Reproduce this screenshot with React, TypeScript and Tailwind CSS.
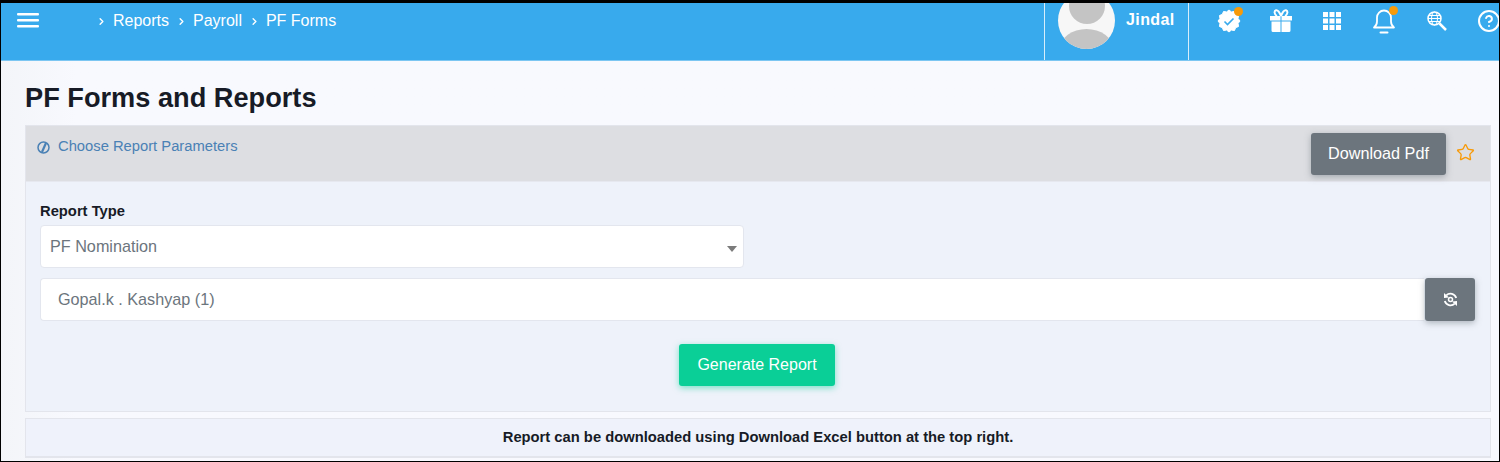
import React from 'react'
import { ChevronRight, CircleHelp, Star } from 'lucide-react'

const Dot = () => <span className="absolute -top-[2px] -right-[2px] w-[9px] h-[9px] rounded-full bg-[#f79a09]" />

const BadgeIcon = () => {
  // scalloped seal: points built around a circle
  const pts: string[] = []
  for (let i = 0; i < 24; i++) {
    const r = i % 2 === 0 ? 11 : 9.4
    const a = (i * Math.PI) / 12
    pts.push(`${12 + r * Math.cos(a)},${12 + r * Math.sin(a)}`)
  }
  return (
    <svg width="24" height="24" viewBox="0 0 24 24">
      <polygon points={pts.join(' ')} fill="#fff" stroke="#fff" strokeLinejoin="round" />
      <path d="M7.500 12.500l3 3 6-6" fill="none" stroke="#38aaed" strokeWidth="1.600" />
    </svg>
  )
}

const GiftIcon = () => (
  <svg width="24" height="24" viewBox="0 0 24 24" fill="#fff">
    <path d="M1 7h10.500v4.500H1zM12.500 7H23v4.500H12.500zM2.500 12.500h9V23H4a1.500 1.500 0 0 1-1.500-1.500zM12.500 12.500h9v9A1.500 1.500 0 0 1 20 23h-7.500z" />
    <path d="M12 7C10 2 8.500 1 7 1.300 5 1.700 5 5.500 8 7M12 7c2-5 3.500-6 5-5.700 2 .4 2 4.200-1 5.700" fill="none" stroke="#fff" strokeWidth="2" />
  </svg>
)

const GridIcon = () => (
  <svg width="18" height="18" viewBox="0 0 18 18" fill="#fff">
    {[0, 6.5, 13].map((y) =>
      [0, 6.5, 13].map((x) => <rect key={`${x}-${y}`} x={x} y={y} width="5" height="5" />)
    )}
  </svg>
)

const BellIcon = () => (
  <svg width="24" height="26" viewBox="0 0 24 26" fill="none" stroke="#fff" strokeWidth="1.800" strokeLinecap="round">
    <path d="M2 19.500c2-1.500 3-3 3-6V9.500a7 7 0 0 1 14 0v4c0 3 1 4.500 3 6z" strokeLinejoin="round" />
    <path d="M8.500 24.500h7" strokeWidth="2" />
  </svg>
)

const GlobeSearchIcon = () => (
  <svg width="20" height="20" viewBox="0 0 20 20" fill="none" stroke="#fff">
    <circle cx="7.500" cy="7.500" r="6.500" strokeWidth="1.500" />
    <ellipse cx="7.500" cy="7.500" rx="3" ry="6.500" strokeWidth="1" />
    <path d="M1 7.500h13M2 4.500h11M2 10.500h11" strokeWidth="1" />
    <path d="M12.500 12.500L19 19" strokeWidth="2.500" />
  </svg>
)

const SyncIcon = () => (
  <svg width="15" height="15" viewBox="0 0 15 15" fill="none" stroke="#fff" strokeWidth="1.800">
    <path d="M13.200 6A6 6 0 0 0 3.300 3.400M1.800 9A6 6 0 0 0 11.700 11.600" />
    <polygon points="1,1 1,6 6,5.500" fill="#fff" stroke="none" />
    <polygon points="14,14 14,9 9,9.500" fill="#fff" stroke="none" />
    <circle cx="7.500" cy="7.500" r="2" strokeWidth="1.500" />
  </svg>
)

const SlashCircleIcon = () => (
  <svg width="13" height="13" viewBox="0 0 13 13" fill="none" stroke="#4a81b5" strokeWidth="1.500">
    <circle cx="6.500" cy="6.500" r="5.500" />
    <path d="M9 2L5 11" strokeWidth="2.200" />
  </svg>
)

const Crumb = ({ label }: { label: string }) => (
  <div className="flex items-center gap-[6px]">
    <ChevronRight className="w-[11px] h-[11px] text-white" strokeWidth={3} />
    <span>{label}</span>
  </div>
)

export default function App() {
  return (
    <div className="w-[1500px] h-[462px] overflow-hidden bg-black pt-[3px] pl-[1px] pr-[1px] pb-[1px] font-['Liberation_Sans',Arial,sans-serif]">
      <div className="h-full flex flex-col bg-gradient-to-r from-[#f3f5f9] via-[#f8f9fe] via-[5%] to-[#f8f9fe]">
        {/* Top bar */}
        <div className="h-[58px] shrink-0 flex bg-[#38aaed] border-b border-[#7cc6f2] overflow-hidden">
          <div className="w-[1043px] shrink-0 flex items-start pl-[16px]">
            <svg width="22" height="15" viewBox="0 0 22 15" className="mt-[10px]" fill="#fff">
              <rect width="22" height="2.500" rx="1" />
              <rect y="6" width="22" height="2.500" rx="1" />
              <rect y="12" width="22" height="2.500" rx="1" />
            </svg>
            <div className="ml-[57px] mt-[8px] flex gap-[7px] text-[16px] leading-[20px] text-white">
              <Crumb label="Reports" />
              <Crumb label="Payroll" />
              <Crumb label="PF Forms" />
            </div>
          </div>

          <div className="w-[145px] shrink-0 border-x border-[#d7eefb] flex items-start pl-[13px]">
            <div className="relative w-[57px] h-[57px] -mt-[11px] rounded-full bg-[#f7f7f7] overflow-hidden shrink-0">
              <div className="absolute left-[11px] top-[-4px] w-[36px] h-[36px] rounded-full bg-[#c4c4c4]" />
              <div className="absolute left-[2px] top-[37px] w-[53px] h-[40px] rounded-[50%] bg-[#c4c4c4]" />
            </div>
            <span className="ml-[11px] mt-[8px] text-[16px] leading-[18px] font-bold text-white tracking-[0.4px]">Jindal</span>
          </div>

          <div className="flex-1 flex items-start text-white">
            <div className="relative ml-[28px] mt-[6px] w-[24px] h-[24px]">
              <BadgeIcon />
              <Dot />
            </div>
            <div className="ml-[28px] mt-[6px] w-[24px] h-[24px]">
              <GiftIcon />
            </div>
            <div className="ml-[30px] mt-[9px] w-[18px] h-[18px]">
              <GridIcon />
            </div>
            <div className="relative ml-[31px] mt-[5px] w-[24px] h-[26px]">
              <BellIcon />
              <Dot />
            </div>
            <div className="ml-[31px] mt-[8px] w-[20px] h-[20px]">
              <GlobeSearchIcon />
            </div>
            <div className="ml-[30px] mt-[6px] w-[24px] h-[24px]">
              <CircleHelp className="w-[24px] h-[24px] text-white" strokeWidth={2} />
            </div>
          </div>
        </div>

        {/* Page */}
        <div className="flex-1 pl-[24px] pr-[8px]">
          <h1 className="h-[64px] pt-[20px] text-[27.2px] leading-[34px] font-bold text-[#171b26]">PF Forms and Reports</h1>

          <div className="border border-[#e3e5ec]">
            <div className="h-[55px] flex items-start bg-[#dddee2] pl-[11px] pr-[15px]">
              <div className="mt-[11px] flex items-center gap-[8px] text-[14.75px] leading-[18px] text-[#4a81b5]">
                <span className="mt-[3px]"><SlashCircleIcon /></span>
                <span>Choose Report Parameters</span>
              </div>
              <button className="ml-auto mt-[7px] w-[135px] h-[42px] pb-[2px] rounded-[3px] bg-[#6c757d] text-[16.2px] text-white shadow-[0_2px_6px_rgba(108,117,125,0.5)]">
                Download Pdf
              </button>
              <Star className="ml-[10px] mt-[17px] w-[19px] h-[19px] text-[#f79a09]" strokeWidth={1.7} />
            </div>

            <div className="h-[230px] bg-[#eef2fa] border-t border-[#e6e8ef] pl-[14px] pr-[15px]">
              <label className="block pt-[20px] text-[14.75px] leading-[18px] font-bold text-[#171b26]">Report Type</label>
              <div className="relative mt-[5px] w-[704px] h-[43px] flex items-center rounded-[4px] bg-white border border-[#e3e6ee] pl-[9px] text-[16.2px] text-[#6c757d]">
                PF Nomination
                <span className="absolute right-[6px] top-[20px] w-0 h-0 border-x-[5.5px] border-x-transparent border-t-[6px] border-t-[#7b7b7b]" />
              </div>
              <div className="mt-[10px] flex h-[43px]">
                <div className="flex-1 flex items-center bg-white border-y border-l border-[#e3e6ee] rounded-l-[4px] pl-[17px] text-[16.2px] text-[#6c757d]">
                  Gopal.k . Kashyap (1)
                </div>
                <button className="w-[50px] ml-[1px] flex items-center justify-center rounded-[3px] bg-[#6c757d] shadow-[0_2px_6px_rgba(108,117,125,0.5)]">
                  <SyncIcon />
                </button>
              </div>
              <div className="mt-[23px] flex justify-center">
                <button className="w-[156px] h-[42px] mr-[1px] rounded-[3px] bg-[#0acf97] text-[16px] text-white shadow-[0_2px_6px_rgba(10,207,151,0.5)]">
                  Generate Report
                </button>
              </div>
            </div>
          </div>

          <div className="mt-[6px] h-[40px] flex items-center justify-center bg-[#eff2fb] border border-[#e3e5ec] border-b-[2px] text-[14.75px] font-bold text-[#171b26]">
            Report can be downloaded using Download Excel button at the top right.
          </div>
        </div>
      </div>
    </div>
  )
}
